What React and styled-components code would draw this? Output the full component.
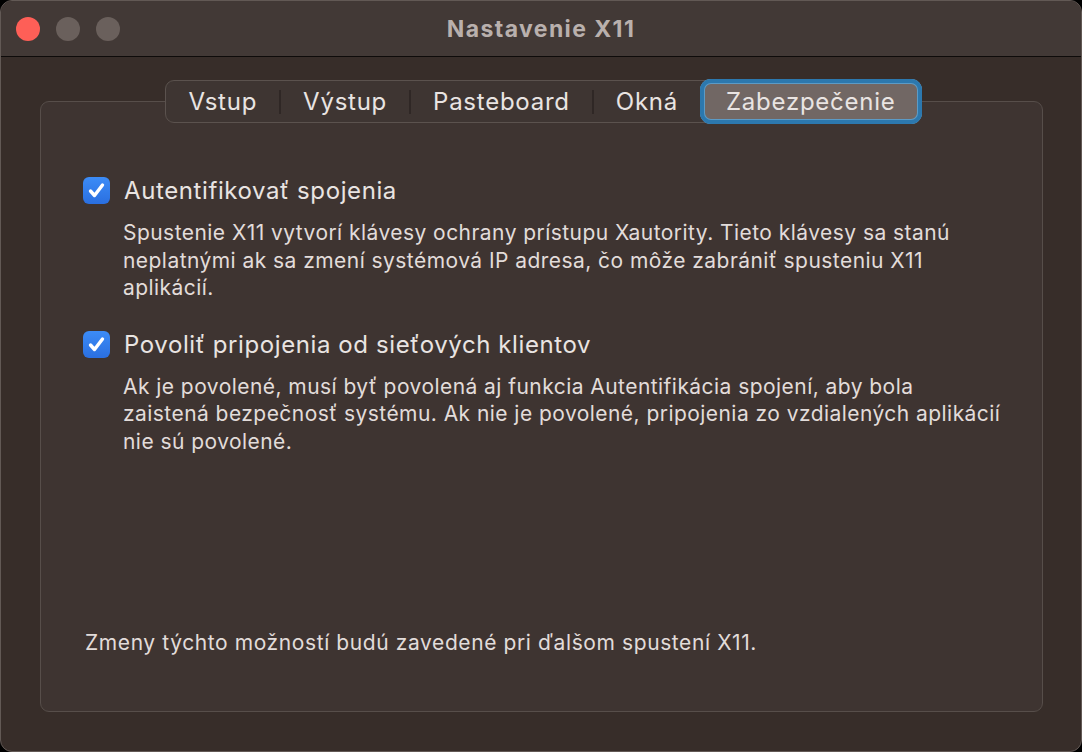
import React from "react";
import styled, { createGlobalStyle } from "styled-components";

const GlobalStyle = createGlobalStyle`
  html, body {
    margin: 0;
    padding: 0;
    background: #000;
  }
  body {
    font-family: Inter, "Noto Sans", "Liberation Sans", sans-serif;
    -webkit-font-smoothing: antialiased;
  }
`;

const Window = styled.div`
  box-sizing: border-box;
  width: 1082px;
  height: 752px;
  border-radius: 12px;
  border: 1px solid #625955;
  background: #372d29;
  overflow: hidden;
  display: flex;
  flex-direction: column;
`;

const TitleBar = styled.header`
  height: 55px;
  flex-shrink: 0;
  background: #423936;
  border-bottom: 1px solid #0e0b0a;
  display: grid;
  grid-template-columns: 1fr auto 1fr;
  align-items: center;
  padding: 0 15px;
`;

const Lights = styled.div`
  display: flex;
  gap: 16px;
`;

const Light = styled.span`
  width: 24px;
  height: 24px;
  border-radius: 50%;
  background: ${(props) => props.$color};
`;

const Title = styled.h1`
  margin: 0;
  font-size: 23px;
  font-weight: 700;
  color: #b9b0ad;
  letter-spacing: 1.4px;
`;

const Content = styled.main`
  padding: 23px 38px 0 39px;
  display: flex;
  flex-direction: column;
`;

const TabsRow = styled.div`
  display: flex;
  justify-content: center;
  position: relative;
  z-index: 1;
  margin-bottom: -22px;
  padding-left: 2px;
`;

const Segmented = styled.nav`
  display: flex;
  align-items: center;
  height: 43px;
  box-sizing: border-box;
  border: 1px solid #5b524e;
  border-radius: 9px;
  background: #3e3532;
`;

const Tab = styled.div`
  box-sizing: border-box;
  height: ${(props) => (props.$active ? "45px" : "auto")};
  display: flex;
  align-items: center;
  padding: ${(props) => (props.$active ? "0 26px" : "0 22px")};
  font-size: 24px;
  letter-spacing: 0.75px;
  color: #e9e4e2;
  border-radius: 11px;
  background: ${(props) => (props.$active ? "#716764" : "transparent")};
  box-shadow: ${(props) =>
    props.$active
      ? "inset 0 0 0 4px #2c78ae, inset 0 0 0 5px #5c9bc6"
      : "none"};
  margin-right: ${(props) => (props.$active ? "-3px" : "0")};
`;

const Separator = styled.span`
  width: 2px;
  height: 24px;
  background: #2f2725;
`;

const Panel = styled.section`
  box-sizing: border-box;
  height: 611px;
  border: 1px solid #574e4a;
  border-radius: 9px;
  background: #3e3431;
  padding: 74px 10px 56px 42px;
  display: flex;
  flex-direction: column;
`;

const Option = styled.div`
  display: flex;
  flex-direction: column;
  margin-bottom: 28px;
`;

const OptionHead = styled.label`
  display: flex;
  align-items: center;
  gap: 14px;
  font-size: 24px;
  letter-spacing: 0.6px;
  color: #e9e4e2;
`;

const Box = styled.span`
  width: 27px;
  height: 27px;
  border-radius: 6px;
  background: linear-gradient(#3c8cf7, #2a6fe0);
  display: flex;
  align-items: center;
  justify-content: center;
  flex-shrink: 0;
`;

const Description = styled.p`
  margin: 14px 0 0 40px;
  font-size: 21px;
  letter-spacing: 0.45px;
  line-height: 27.5px;
  color: #e2dcda;
`;

const Footer = styled.p`
  margin: auto 0 0 2px;
  font-size: 21px;
  letter-spacing: 0.6px;
  color: #e2dcda;
`;

function Checkbox() {
  return (
    <Box>
      <svg width="19" height="19" viewBox="0 0 19 19">
        <path
          d="M3.5 10 L7.5 14.5 L15.5 4"
          fill="none"
          stroke="#fff"
          strokeWidth="3.4"
          strokeLinecap="round"
          strokeLinejoin="round"
        />
      </svg>
    </Box>
  );
}

const tabs = ["Vstup", "Výstup", "Pasteboard", "Okná", "Zabezpečenie"];

export default function App() {
  return (
    <>
      <GlobalStyle />
      <Window>
        <TitleBar>
          <Lights>
            <Light $color="#fe5f57" />
            <Light $color="#6a605c" />
            <Light $color="#6a605c" />
          </Lights>
          <Title>Nastavenie X11</Title>
          <span />
        </TitleBar>
        <Content>
          <TabsRow>
            <Segmented>
              {tabs.map((tab, index) => (
                <React.Fragment key={tab}>
                  <Tab $active={tab === "Zabezpečenie"}>{tab}</Tab>
                  {index < tabs.length - 2 && <Separator />}
                </React.Fragment>
              ))}
            </Segmented>
          </TabsRow>
          <Panel>
            <Option>
              <OptionHead>
                <Checkbox />
                Autentifikovať spojenia
              </OptionHead>
              <Description>
                Spustenie X11 vytvorí klávesy ochrany prístupu Xautority. Tieto
                klávesy sa stanú
                <br />
                neplatnými ak sa zmení systémová IP adresa, čo môže zabrániť
                spusteniu X11
                <br />
                aplikácií.
              </Description>
            </Option>
            <Option>
              <OptionHead>
                <Checkbox />
                Povoliť pripojenia od sieťových klientov
              </OptionHead>
              <Description>
                Ak je povolené, musí byť povolená aj funkcia Autentifikácia
                spojení, aby bola
                <br />
                zaistená bezpečnosť systému. Ak nie je povolené, pripojenia zo
                vzdialených aplikácií
                <br />
                nie sú povolené.
              </Description>
            </Option>
            <Footer>
              Zmeny týchto možností budú zavedené pri ďalšom spustení X11.
            </Footer>
          </Panel>
        </Content>
      </Window>
    </>
  );
}
